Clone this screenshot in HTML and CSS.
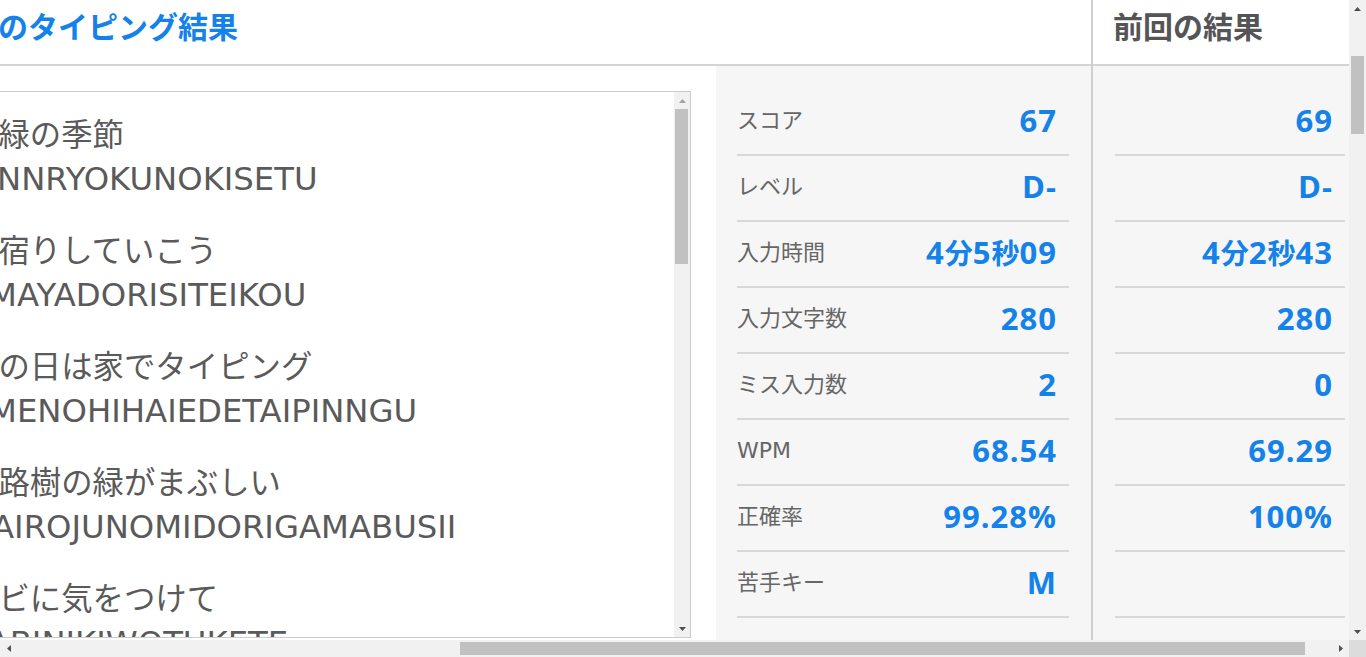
FILE: index.html
```html
<!DOCTYPE html>
<html lang="ja">
<head>
<meta charset="utf-8">
<title>タイピング結果</title>
<link rel="stylesheet" href="styles.css">
</head>
<body>
<div class="window">
  <div class="viewport">
    <div class="page">
      <section class="col current">
        <header class="col-head"><h2 class="title">今回のタイピング結果</h2></header>
        <div class="current-body">
          <div class="listbox">
            <div class="list">
              <div class="entry"><p class="jp">新緑の季節</p><p class="ro">SINNRYOKUNOKISETU</p></div>
              <div class="entry"><p class="jp">雨宿りしていこう</p><p class="ro">AMAYADORISITEIKOU</p></div>
              <div class="entry"><p class="jp">雨の日は家でタイピング</p><p class="ro">AMENOHIHAIEDETAIPINNGU</p></div>
              <div class="entry"><p class="jp">街路樹の緑がまぶしい</p><p class="ro">GAIROJUNOMIDORIGAMABUSII</p></div>
              <div class="entry"><p class="jp">カビに気をつけて</p><p class="ro">KABINIKIWOTUKETE</p></div>
            </div>
            <div class="sbar">
              <div class="sbtn"><svg width="7" height="4" viewBox="0 0 7 4"><path d="M0 4L3.5 0L7 4Z" fill="#a3a3a3"/></svg></div>
              <div class="strack"><div class="sthumb"></div></div>
              <div class="sbtn"><svg width="7" height="4" viewBox="0 0 7 4"><path d="M0 0L3.5 4L7 0Z" fill="#505050"/></svg></div>
            </div>
          </div>
          <div class="stats">
            <div class="row"><span class="label">スコア</span><span class="val">67</span></div>
            <div class="row"><span class="label">レベル</span><span class="val">D-</span></div>
            <div class="row"><span class="label">入力時間</span><span class="val">4<span class="unit">分</span>5<span class="unit">秒</span>09</span></div>
            <div class="row"><span class="label">入力文字数</span><span class="val">280</span></div>
            <div class="row"><span class="label">ミス入力数</span><span class="val">2</span></div>
            <div class="row"><span class="label">WPM</span><span class="val">68.54</span></div>
            <div class="row"><span class="label">正確率</span><span class="val">99.28%</span></div>
            <div class="row"><span class="label">苦手キー</span><span class="val">M</span></div>
          </div>
        </div>
      </section>
      <section class="col previous">
        <header class="col-head"><h2 class="title">前回の結果</h2></header>
        <div class="stats prev">
          <div class="row"><span class="val">69</span></div>
          <div class="row"><span class="val">D-</span></div>
          <div class="row"><span class="val">4<span class="unit">分</span>2<span class="unit">秒</span>43</span></div>
          <div class="row"><span class="val">280</span></div>
          <div class="row"><span class="val">0</span></div>
          <div class="row"><span class="val">69.29</span></div>
          <div class="row"><span class="val">100%</span></div>
          <div class="row"><span class="val"></span></div>
        </div>
      </section>
    </div>
  </div>
  <div class="vscroll">
    <div class="btn"><svg width="7" height="4" viewBox="0 0 7 4"><path d="M0 4L3.5 0L7 4Z" fill="#505050"/></svg></div>
    <div class="vtrack"><div class="vthumb"></div></div>
    <div class="btn"><svg width="7" height="4" viewBox="0 0 7 4"><path d="M0 0L3.5 4L7 0Z" fill="#505050"/></svg></div>
  </div>
  <div class="hscroll">
    <div class="btn"><svg width="4" height="7" viewBox="0 0 4 7"><path d="M4 0L0 3.5L4 7Z" fill="#505050"/></svg></div>
    <div class="htrack"><div class="hthumb"></div></div>
    <div class="btn"><svg width="4" height="7" viewBox="0 0 4 7"><path d="M0 0L4 3.5L0 7Z" fill="#505050"/></svg></div>
  </div>
  <div class="corner"></div>
</div>
</body>
</html>
```
FILE: styles.css
```css
html, body {
  margin: 0;
  padding: 0;
  overflow: hidden;
  background: #ffffff;
}
body {
  font-family: "DejaVu Sans", "Noto Sans CJK JP", sans-serif;
}
.window {
  display: grid;
  grid-template-columns: 1349px 17px;
  grid-template-rows: 640px 17px;
  width: 1366px;
  height: 657px;
}
.viewport {
  overflow: hidden;
  background: #ffffff;
}
.page {
  display: flex;
  margin-left: -100px;
  width: 1449px;
  height: 640px;
}
.col {
  display: flex;
  flex-direction: column;
}
.current {
  width: 1191px;
  flex: none;
}
.previous {
  width: 256px;
  flex: none;
  border-left: 2px solid #cfcfcf;
}
.col-head {
  height: 64px;
  flex: none;
  border-bottom: 2px solid #d4d4d4;
  background: #ffffff;
}
.title {
  margin: 0;
  padding-top: 3px;
  font-family: "Noto Sans CJK JP", sans-serif;
  font-size: 30px;
  line-height: 45px;
  font-weight: bold;
  white-space: nowrap;
}
.current .title {
  color: #1482e8;
  padding-left: 38px;
}
.previous .title {
  color: #555555;
  padding-left: 20px;
}
.current-body {
  flex: 1;
  display: flex;
  min-height: 0;
}
.listbox {
  flex: none;
  margin: 25px 25px 0 60px;
  width: 731px;
  height: 547px;
  box-sizing: border-box;
  border: 1px solid #cccccc;
  display: flex;
  background: #ffffff;
}
.list {
  flex: 1;
  overflow: hidden;
  padding: 17px 0 0 6px;
  color: #5a5a5a;
}
.entry {
  margin-bottom: 22px;
}
.jp {
  margin: 0;
  font-family: "Noto Sans CJK JP", sans-serif;
  font-size: 31.4px;
  line-height: 47px;
  white-space: nowrap;
}
.ro {
  margin: 0;
  font-family: "DejaVu Sans", sans-serif;
  font-size: 32.3px;
  line-height: 47px;
  white-space: nowrap;
}
.sbar {
  width: 16px;
  flex: none;
  display: flex;
  flex-direction: column;
  background: #f1f1f1;
}
.sbtn, .btn {
  flex: none;
  width: 17px;
  height: 17px;
  display: flex;
  align-items: center;
  justify-content: center;
}
.sbtn {
  width: 16px;
}
.strack {
  flex: 1;
}
.sthumb {
  margin: 0 2px 0 1px;
  height: 155px;
  background: #c1c1c1;
}
.stats {
  width: 375px;
  flex: none;
  box-sizing: border-box;
  padding: 24px 22px 0 21px;
  background: #f6f6f6;
}
.stats.prev {
  width: auto;
  flex: 1;
  padding: 24px 4px 0 22px;
}
.row {
  height: 64px;
  box-sizing: content-box;
  border-bottom: 2px solid #d8d8d8;
  display: flex;
  align-items: center;
  justify-content: space-between;
  padding-right: 12px;
}
.prev .row {
  justify-content: flex-end;
}
.label {
  font-family: "DejaVu Sans", "Noto Sans CJK JP", sans-serif;
  font-size: 22px;
  line-height: 22px;
  padding-bottom: 3px;
  color: #666666;
}
.val {
  font-family: "Open Sans", "Noto Sans CJK JP", sans-serif;
  font-size: 31px;
  line-height: 31px;
  padding-bottom: 3px;
  font-weight: bold;
  letter-spacing: 1px;
  color: #1482e8;
}
.unit {
  font-family: "Noto Sans CJK JP", sans-serif;
  font-size: 28px;
  letter-spacing: 0;
}
.vscroll {
  background: #f1f1f1;
  display: flex;
  flex-direction: column;
}
.vtrack {
  flex: 1;
}
.vthumb {
  margin: 39px 2px 0 2px;
  height: 78px;
  background: #c1c1c1;
}
.hscroll {
  background: #f1f1f1;
  display: flex;
}
.htrack {
  flex: 1;
  display: flex;
  align-items: center;
}
.hthumb {
  margin-left: 443px;
  width: 845px;
  height: 13px;
  background: #c1c1c1;
}
.corner {
  background: #dcdcdc;
}
```
